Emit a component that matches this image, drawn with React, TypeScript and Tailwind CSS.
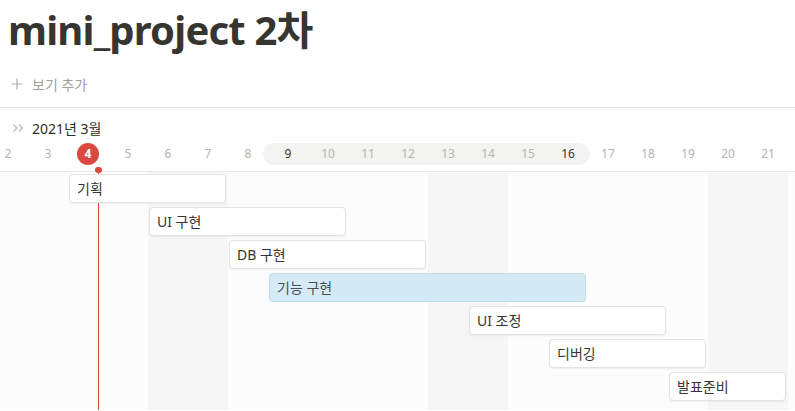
import React from "react";

type Task = { name: string; start: number; end: number; selected?: boolean };

const tasks: Task[] = [
  { name: "기획", start: 4, end: 7 },
  { name: "UI 구현", start: 6, end: 10 },
  { name: "DB 구현", start: 8, end: 12 },
  { name: "기능 구현", start: 9, end: 16, selected: true },
  { name: "UI 조정", start: 14, end: 18 },
  { name: "디버깅", start: 16, end: 19 },
  { name: "발표준비", start: 19, end: 21 },
];

// visible header days 2..21, body columns 2..22 (column index = day - 1)
const headerDays = Array.from({ length: 20 }, (_, i) => i + 2);
const bodyDays = Array.from({ length: 21 }, (_, i) => i + 2);
const weekend = (d: number) => d % 7 === 6 || d % 7 === 0;
const col = (a: number, b: number) => `${a - 1} / ${b}`;

function Chevrons() {
  return (
    <svg width="13" height="12" viewBox="0 0 13 12" fill="none" stroke="#bdbcb9" strokeWidth="1.3">
      <path d="M1.5 2.5 5 6 1.5 9.5" />
      <path d="M7 2.5 10.5 6 7 9.5" />
    </svg>
  );
}

export default function App() {
  return (
    <main className="h-[411px] w-[795px] overflow-hidden bg-white font-['Noto_Sans','Noto_Sans_CJK_KR',sans-serif] text-[#37352f]">
      <h1 className="pl-[8px] pt-[6px] text-[40px] font-bold leading-[48px] tracking-[-0.8px]">
        mini_project 2차
      </h1>

      <div className="mt-[18px] flex h-[24px] items-center gap-[9px] pl-[11px] text-[14px] text-[#a09f9b]">
        <svg width="12" height="12" viewBox="0 0 12 12" stroke="#b0afac" strokeWidth="1.2">
          <path d="M6 0.5v11M0.5 6h11" />
        </svg>
        <span>보기 추가</span>
      </div>

      <section className="mt-[11px] border-t border-[#e3e3e1]">
        <div className="relative z-20 border-b border-[#e6e6e4]">
          <div className="mt-[10px] flex h-[20px] items-center gap-[7px] pl-[12px] text-[14px] text-[#2f2d29]">
            <Chevrons />
            <span>2021년 3월</span>
          </div>

          <div className="mb-[6px] ml-[-12px] mt-[5px] grid h-[22px] w-[800px] grid-cols-[repeat(20,40px)] text-[12px]">
            <div
              className="row-start-1 ml-[-5px] mr-[-2px] rounded-full bg-[#f3f3f2]"
              style={{ gridColumn: col(9, 16) }}
            />
            {headerDays.map((d) => (
              <div
                key={d}
                className="row-start-1 flex items-center justify-center"
                style={{ gridColumn: col(d, d) }}
              >
                {d === 4 ? (
                  <span className="flex h-[22px] w-[22px] items-center justify-center rounded-full bg-[#d9493f] text-[12px] font-bold text-white">
                    4
                  </span>
                ) : (
                  <span className={d === 9 || d === 16 ? "text-[#37352f]" : "text-[#b5b4b1]"}>{d}</span>
                )}
              </div>
            ))}
          </div>

          <span className="absolute bottom-[-2px] left-[95px] h-[6px] w-[7px] rounded-full bg-[#d9493f]" />
        </div>

        <div className="relative h-[238px] overflow-hidden">
          <div className="ml-[-12px] grid h-full w-[840px] grid-cols-[repeat(21,40px)] grid-rows-[repeat(7,33px)_1fr]">
            {bodyDays.map((d) => (
              <div
                key={d}
                className={weekend(d) ? "bg-[#f6f6f6]" : "bg-[#fcfcfc]"}
                style={{ gridColumn: col(d, d), gridRow: "1 / -1" }}
              />
            ))}

            {tasks.map((t, i) => (
              <div
                key={t.name}
                className={
                  "relative z-10 ml-px mr-[2px] mt-[2px] flex h-[29px] items-center rounded-[4px] border pl-[7px] text-[14px] " +
                  (t.selected
                    ? "border-[#bcdbe9] bg-[#d4ebf6] text-[#4a4f53]"
                    : "border-[#e3e3e1] bg-white text-[#37352f] shadow-[0_1px_2px_rgba(15,15,15,0.06)]")
                }
                style={{ gridColumn: col(t.start, t.end), gridRow: `${i + 1} / ${i + 2}` }}
              >
                {t.name}
              </div>
            ))}
          </div>

          {/* current time marker, sits under the task cards */}
          <div className="absolute bottom-0 left-[98px] top-0 z-[5] w-px bg-[#e0443b]" />
        </div>
      </section>
    </main>
  );
}
